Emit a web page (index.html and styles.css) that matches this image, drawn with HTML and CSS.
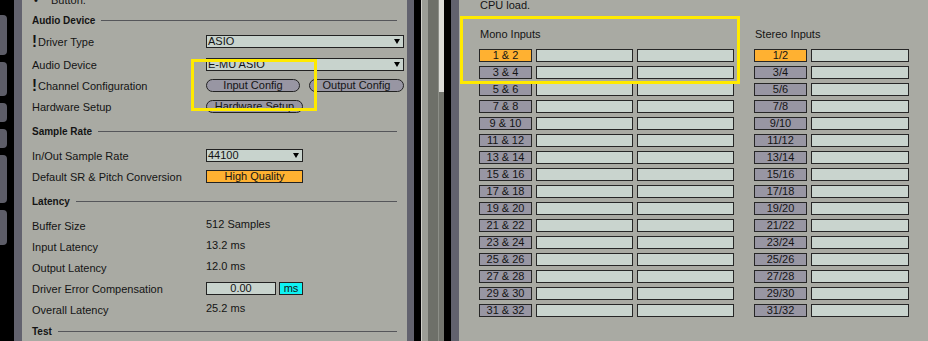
FILE: index.html
```html
<!DOCTYPE html>
<html lang="en">
  <head>
    <meta charset="UTF-8" />
    <meta name="viewport" content="width=device-width, initial-scale=1.0" />
    <title>Preferences - Audio</title>
    <link rel="stylesheet" href="styles.css">
  </head>
  <body>
    <div class="tabs">
      <div class="tab t1"></div>
      <div class="tab t2"></div>
      <div class="tab t3"></div>
      <div class="tab t4"></div>
      <div class="tab t5"></div>
      <div class="tab t6"></div>
    </div>

    <div class="prefs">
      <div class="row note"><span class="dot">&bull;</span>Button.</div>

      <div class="head first">Audio Device</div>
      <div class="row">
        <span class="label"><b class="warn">!</b>Driver Type</span>
        <div class="select wide">ASIO</div>
      </div>
      <div class="row spaced">
        <span class="label">Audio Device</span>
        <div class="select wide">E-MU ASIO</div>
      </div>
      <div class="row">
        <span class="label"><b class="warn">!</b>Channel Configuration</span>
        <div class="btn in-config">Input Config</div>
        <div class="btn out-config">Output Config</div>
      </div>
      <div class="row">
        <span class="label">Hardware Setup</span>
        <div class="btn hw">Hardware Setup</div>
      </div>

      <div class="head">Sample Rate</div>
      <div class="row">
        <span class="label">In/Out Sample Rate</span>
        <div class="select short">44100</div>
      </div>
      <div class="row">
        <span class="label">Default SR &amp; Pitch Conversion</span>
        <div class="toggle on">High Quality</div>
      </div>

      <div class="head">Latency</div>
      <div class="row">
        <span class="label">Buffer Size</span>
        <span class="value">512 Samples</span>
      </div>
      <div class="row">
        <span class="label">Input Latency</span>
        <span class="value">13.2 ms</span>
      </div>
      <div class="row">
        <span class="label">Output Latency</span>
        <span class="value">12.0 ms</span>
      </div>
      <div class="row">
        <span class="label">Driver Error Compensation</span>
        <div class="number">0.00</div>
        <div class="unit">ms</div>
      </div>
      <div class="row">
        <span class="label">Overall Latency</span>
        <span class="value">25.2 ms</span>
      </div>

      <div class="head last">Test</div>
    </div>

    <div class="divider">
      <div class="edge"></div>
      <div class="gap"></div>
      <div class="hilite"></div>
      <div class="light"></div>
      <div class="shade"></div>
      <div class="scroll"><div class="thumb"></div></div>
      <div class="gap"></div>
      <div class="edge wide"></div>
    </div>

    <div class="inputs">
      <div class="cpu">CPU load.</div>
      <div class="groups">
        <div class="group mono">
          <div class="group-title">Mono Inputs</div>
          <div class="grid">
            <div class="ch on">1 &amp; 2</div><div class="slot"></div><div class="slot"></div>
            <div class="ch">3 &amp; 4</div><div class="slot"></div><div class="slot"></div>
            <div class="ch">5 &amp; 6</div><div class="slot"></div><div class="slot"></div>
            <div class="ch">7 &amp; 8</div><div class="slot"></div><div class="slot"></div>
            <div class="ch">9 &amp; 10</div><div class="slot"></div><div class="slot"></div>
            <div class="ch">11 &amp; 12</div><div class="slot"></div><div class="slot"></div>
            <div class="ch">13 &amp; 14</div><div class="slot"></div><div class="slot"></div>
            <div class="ch">15 &amp; 16</div><div class="slot"></div><div class="slot"></div>
            <div class="ch">17 &amp; 18</div><div class="slot"></div><div class="slot"></div>
            <div class="ch">19 &amp; 20</div><div class="slot"></div><div class="slot"></div>
            <div class="ch">21 &amp; 22</div><div class="slot"></div><div class="slot"></div>
            <div class="ch">23 &amp; 24</div><div class="slot"></div><div class="slot"></div>
            <div class="ch">25 &amp; 26</div><div class="slot"></div><div class="slot"></div>
            <div class="ch">27 &amp; 28</div><div class="slot"></div><div class="slot"></div>
            <div class="ch">29 &amp; 30</div><div class="slot"></div><div class="slot"></div>
            <div class="ch">31 &amp; 32</div><div class="slot"></div><div class="slot"></div>
          </div>
        </div>
        <div class="group stereo">
          <div class="group-title">Stereo Inputs</div>
          <div class="grid">
            <div class="ch on">1/2</div><div class="slot"></div>
            <div class="ch">3/4</div><div class="slot"></div>
            <div class="ch">5/6</div><div class="slot"></div>
            <div class="ch">7/8</div><div class="slot"></div>
            <div class="ch">9/10</div><div class="slot"></div>
            <div class="ch">11/12</div><div class="slot"></div>
            <div class="ch">13/14</div><div class="slot"></div>
            <div class="ch">15/16</div><div class="slot"></div>
            <div class="ch">17/18</div><div class="slot"></div>
            <div class="ch">19/20</div><div class="slot"></div>
            <div class="ch">21/22</div><div class="slot"></div>
            <div class="ch">23/24</div><div class="slot"></div>
            <div class="ch">25/26</div><div class="slot"></div>
            <div class="ch">27/28</div><div class="slot"></div>
            <div class="ch">29/30</div><div class="slot"></div>
            <div class="ch">31/32</div><div class="slot"></div>
          </div>
        </div>
      </div>
    </div>

    <!-- highlight boxes drawn over the screenshot -->
    <div class="mark mark-left"></div>
    <div class="mark mark-right"></div>
  </body>
</html>
```

FILE: styles.css
```css
* {
  margin: 0;
  padding: 0;
  box-sizing: border-box;
}
body {
  display: flex;
  height: 341px;
  overflow: hidden;
  background-color: #a9aaa3;
  color: #141414;
  font-family: "Liberation Sans", Arial, sans-serif;
  font-size: 11px;
  position: relative;
}

/* left tab strip */
.tabs {
  width: 22px;
  flex-shrink: 0;
  background-color: #000;
  border-right: 8px solid #62626e;
  display: flex;
  flex-direction: column;
  gap: 7px;
  padding-top: 15px;
}
.tab {
  width: 7px;
  background-color: #5d5d68;
  border-radius: 0 4px 4px 0;
}
.t1 { height: 40px; }
.t2 { height: 34px; }
.t3 { height: 19px; }
.t4 { height: 19px; }
.t5 { height: 48px; }
.t6 { height: 35px; }

/* preferences column */
.prefs {
  width: 385px;
  flex-shrink: 0;
  padding: 0 3px 0 10px;
}
.row {
  display: flex;
  align-items: center;
  height: 21px;
}
.row.note {
  margin-top: -11px;
  padding-left: 2px;
}
.row.note .dot {
  width: 17px;
}
.row.spaced {
  margin-top: 2px;
}
.label {
  display: flex;
  align-items: center;
  width: 174px;
  flex-shrink: 0;
  white-space: nowrap;
}
.warn {
  display: inline-block;
  width: 6px;
  font-size: 13px;
  line-height: 12px;
  transform: scale(1.15, 1.25);
  transform-origin: left center;
}
.value {
  padding-bottom: 3px;
}
.head {
  display: flex;
  align-items: center;
  height: 21px;
  margin: 4px 0 3px;
  font-size: 10px;
  font-weight: bold;
}
.head::after {
  content: "";
  flex: 1;
  border-top: 1px solid #55565a;
  margin: 0 7px 0 6px;
}
.head.first {
  margin: 0;
}
.head.last {
  margin: 1px 0 0;
}

/* controls */
.select,
.btn,
.toggle,
.number,
.unit {
  height: 13px;
  border: 1px solid #222;
  line-height: 11px;
  white-space: nowrap;
}
.select {
  display: flex;
  align-items: center;
  justify-content: space-between;
  padding: 0 3px 0 1px;
  background-color: #c8d3cd;
}
.select::after {
  content: "";
  border-left: 3px solid transparent;
  border-right: 3px solid transparent;
  border-top: 5px solid #000;
}
.select.wide { width: 198px; }
.select.short { width: 97px; }
.btn {
  text-align: center;
  border-radius: 7px;
  background-color: #9896a3;
}
.in-config { width: 94px; }
.out-config { width: 95px; margin-left: 9px; }
.hw { width: 97px; }
.toggle {
  width: 97px;
  text-align: center;
  background-color: #9896a3;
}
.toggle.on {
  background-color: #ffb131;
}
.number {
  width: 70px;
  text-align: center;
  background-color: #c8d3cd;
}
.unit {
  width: 24px;
  margin-left: 3px;
  text-align: center;
  background-color: #0ff2f2;
}

/* splitter between the two panes */
.divider {
  display: flex;
  flex-shrink: 0;
}
.divider .edge { width: 7px; background-color: #62626e; }
.divider .edge.wide { width: 8px; }
.divider .gap { width: 7px; background-color: #000; }
.divider .hilite { width: 1px; background-color: #cfcfc8; }
.divider .light { width: 6px; background-color: #9c9e96; }
.divider .shade { width: 10px; background-color: #6e7069; }
.divider .scroll {
  width: 6px;
  background-color: #73756e;
  border-left: 1px solid #8d8f88;
}
.divider .thumb {
  height: 92px;
  background-color: #dcdcd7;
}

/* input config pane */
.inputs {
  flex: 1;
  padding-left: 20px;
}
.cpu {
  height: 11px;
  line-height: 11px;
  padding-left: 1px;
}
.groups {
  display: flex;
  gap: 20px;
  margin-top: 17px;
}
.group-title {
  height: 13px;
  line-height: 13px;
  padding-left: 1px;
  margin-bottom: 8px;
}
.grid {
  display: grid;
  grid-template-columns: 53px 97px 97px;
  gap: 4px;
}
.stereo .grid {
  grid-template-columns: 53px 98px;
}
.ch,
.slot {
  height: 13px;
  border: 1px solid #262626;
  line-height: 11px;
  text-align: center;
}
.ch {
  background-color: #9896a3;
}
.ch.on {
  background-color: #ffb131;
}
.slot {
  background-color: #c9d4ce;
}

/* yellow annotation frames */
.mark {
  position: absolute;
  border: 3px solid #ffea00;
}
.mark-left {
  left: 191px;
  top: 59px;
  width: 126px;
  height: 52px;
}
.mark-right {
  left: 460px;
  top: 16px;
  width: 280px;
  height: 68px;
}
```
